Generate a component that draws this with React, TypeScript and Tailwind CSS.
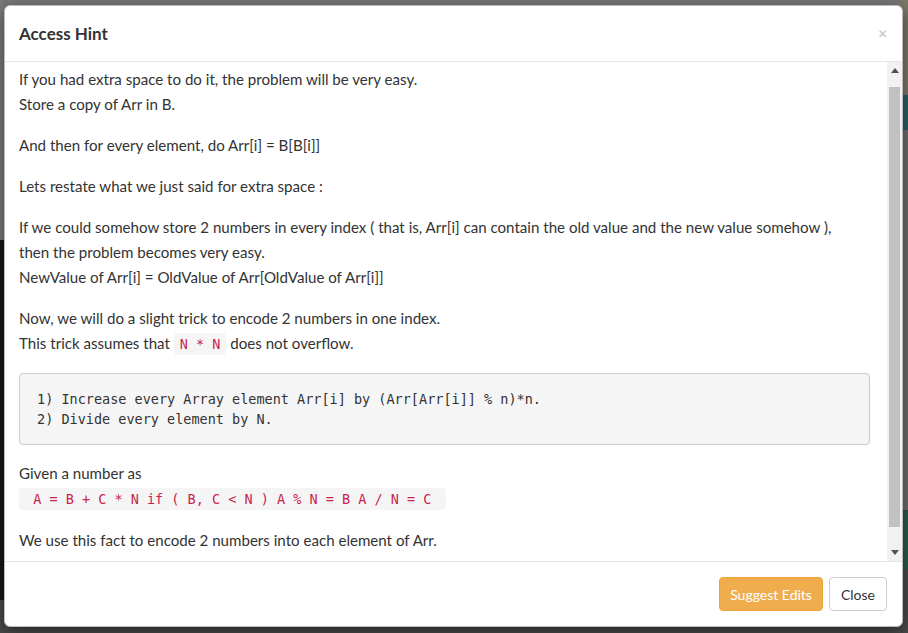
export default function App() {
  const sans = { fontFamily: "Lato, 'Noto Sans', sans-serif" };
  const mono = "font-['DejaVu_Sans_Mono',monospace] text-[13.5px]";
  return (
    <div className="relative h-[633px] w-[908px] overflow-hidden bg-[#737373]" style={sans}>
      {/* dimmed page behind the dialog */}
      <div className="flex h-full">
        <div className="flex w-[4px] flex-col">
          <div className="h-[240px] bg-[#7a7a7a]" />
          <div className="h-[360px] bg-[#161616]" />
          <div className="flex-1 bg-[#4a4a4a]" />
        </div>
        <div className="flex flex-1 flex-col">
          <div className="h-[300px] bg-[#767676]" />
          <div className="flex-1 bg-[#4d4d4d]" />
        </div>
        <div className="flex w-[8px] flex-col">
          <div className="h-[95px] bg-[#7a7868]" />
          <div className="h-[35px] bg-[#2e5e68]" />
          <div className="h-[380px] bg-[#6d6d6d]" />
          <div className="h-[60px] bg-[#2d5a48]" />
          <div className="flex-1 bg-[#4a4a4a]" />
        </div>
      </div>

      {/* dialog */}
      <div className="absolute left-[4px] top-[5px] flex h-[622px] w-[899px] flex-col rounded-[6px] border border-[#bbb] bg-white text-[#333] shadow-[0_5px_15px_rgba(0,0,0,0.5)]">
        <div className="flex h-[56px] items-center justify-between border-b border-[#e5e5e5] px-[14px]">
          <h4 className="text-[17px] font-bold text-[#333]">Access Hint</h4>
          <span className="mr-[1px] text-[15px] font-bold leading-none text-[#c8c8c8]">×</span>
        </div>

        <div className="flex h-[500px] border-b border-[#e5e5e5]">
          <div className="flex-1 overflow-hidden pl-[14px] pr-[17px] pt-[5px] text-[15.1px] leading-[25px]">
            <p className="mb-4">
              If you had extra space to do it, the problem will be very easy.
              <br />
              Store a copy of Arr in B.
            </p>
            <p className="mb-4">And then for every element, do Arr[i] = B[B[i]]</p>
            <p className="mb-4">Lets restate what we just said for extra space :</p>
            <p className="mb-4 max-w-[840px]">
              If we could somehow store 2 numbers in every index ( that is, Arr[i] can contain the old value and the new value somehow ),
              then the problem becomes very easy.
              <br />
              NewValue of Arr[i] = OldValue of Arr[OldValue of Arr[i]]
            </p>
            <p className="mb-4">
              Now, we will do a slight trick to encode 2 numbers in one index.
              <br />
              This trick assumes that{" "}
              <code className={`${mono} rounded-[4px] bg-[#f5f5f5] px-[6px] py-[3px] text-[#c7254e]`}>N * N</code>{" "}
              does not overflow.
            </p>
            <pre
              className={`${mono} mb-4 rounded-[4px] border border-[#ccc] bg-[#f5f5f5] px-[17px] py-[15px] leading-[20px] text-[#333]`}
            >
              {"1) Increase every Array element Arr[i] by (Arr[Arr[i]] % n)*n.\n2) Divide every element by N."}
            </pre>
            <p className="mb-4">
              Given a number as
              <br />
              <code className={`${mono} whitespace-pre rounded-[4px] bg-[#f5f5f5] px-[6px] py-[3px] text-[#c7254e]`}>
                {" A = B + C * N if ( B, C < N ) A % N = B A / N = C "}
              </code>
            </p>
            <p className="mb-4">We use this fact to encode 2 numbers into each element of Arr.</p>
          </div>

          {/* scrollbar */}
          <div className="flex w-[15px] flex-col bg-[#f1f1f1]">
            <div className="flex h-[17px] items-center justify-center">
              <svg width="8" height="5" viewBox="0 0 8 5">
                <path d="M0 5 L4 0 L8 5 Z" fill="#505050" />
              </svg>
            </div>
            <div className="h-[8px]" />
            <div className="mx-[2px] h-[440px] bg-[#c1c1c1]" />
            <div className="flex-1" />
            <div className="flex h-[17px] items-center justify-center">
              <svg width="8" height="5" viewBox="0 0 8 5">
                <path d="M0 0 L8 0 L4 5 Z" fill="#505050" />
              </svg>
            </div>
          </div>
        </div>

        <div className="flex flex-1 items-center justify-end gap-[6px] px-[15px]">
          <button className="h-[34px] rounded-[4px] border border-[#eea236] bg-[#f0ad4e] px-[10px] text-[14px] text-white">
            Suggest Edits
          </button>
          <button className="h-[34px] rounded-[4px] border border-[#ccc] bg-white px-[11px] text-[14px] text-[#333]">
            Close
          </button>
        </div>
      </div>
    </div>
  );
}
